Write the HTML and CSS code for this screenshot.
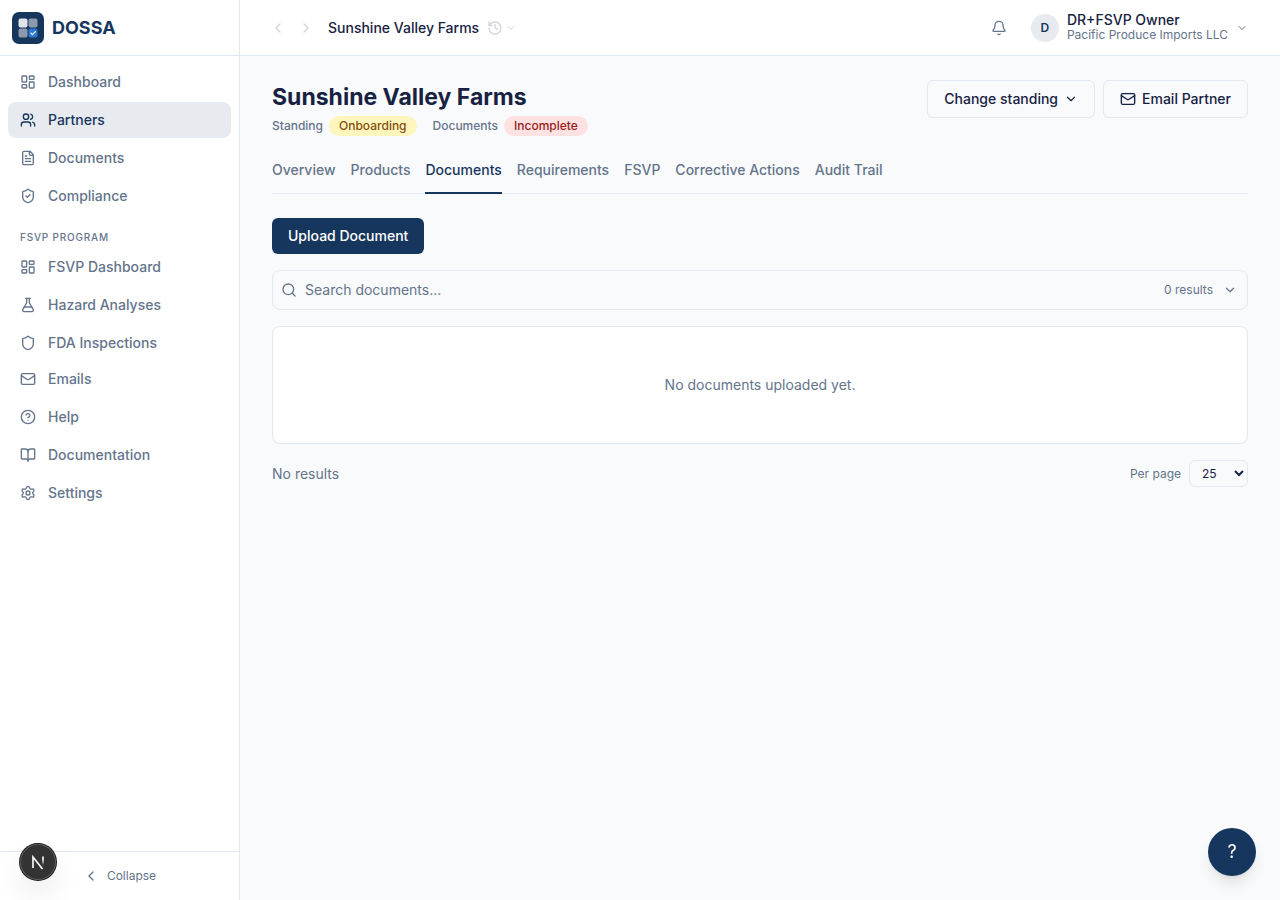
FILE: index.html
```html
<!DOCTYPE html>
<html lang="en">
<head>
<meta charset="utf-8">
<meta name="viewport" content="width=device-width, initial-scale=1">
<title>Sunshine Valley Farms - DOSSA</title>
<link rel="stylesheet" href="styles.css">
</head>
<body>
<svg class="sprite" aria-hidden="true">
  <symbol id="dashboard" viewBox="0 0 24 24"><rect width="7" height="9" x="3" y="3" rx="1"/><rect width="7" height="5" x="14" y="3" rx="1"/><rect width="7" height="9" x="14" y="12" rx="1"/><rect width="7" height="5" x="3" y="16" rx="1"/></symbol>
  <symbol id="users" viewBox="0 0 24 24"><path d="M16 21v-2a4 4 0 0 0-4-4H6a4 4 0 0 0-4 4v2"/><circle cx="9" cy="7" r="4"/><path d="M22 21v-2a4 4 0 0 0-3-3.87"/><path d="M16 3.13a4 4 0 0 1 0 7.75"/></symbol>
  <symbol id="file" viewBox="0 0 24 24"><path d="M15 2H6a2 2 0 0 0-2 2v16a2 2 0 0 0 2 2h12a2 2 0 0 0 2-2V7Z"/><path d="M14 2v4a2 2 0 0 0 2 2h4"/><path d="M10 9H8"/><path d="M16 13H8"/><path d="M16 17H8"/></symbol>
  <symbol id="shield" viewBox="0 0 24 24"><path d="M20 13c0 5-3.5 7.5-7.66 8.95a1 1 0 0 1-.67-.01C7.5 20.5 4 18 4 13V6a1 1 0 0 1 1-1c2 0 4.500-1.200 6.240-2.720a1.170 1.170 0 0 1 1.520 0C14.510 3.810 17 5 19 5a1 1 0 0 1 1 1z"/></symbol>
  <symbol id="shield-check" viewBox="0 0 24 24"><use href="#shield" width="24" height="24"/><path d="m9 12 2 2 4-4"/></symbol>
  <symbol id="flask" viewBox="0 0 24 24"><path d="M14 2v6a2 2 0 0 0 .245.960l5.510 10.080A2 2 0 0 1 18 22H6a2 2 0 0 1-1.755-2.960l5.510-10.080A2 2 0 0 0 10 8V2"/><path d="M6.453 15h11.094"/><path d="M8.500 2h7"/></symbol>
  <symbol id="mail" viewBox="0 0 24 24"><rect width="20" height="16" x="2" y="4" rx="2"/><path d="m22 7-8.970 5.700a1.940 1.940 0 0 1-2.060 0L2 7"/></symbol>
  <symbol id="help" viewBox="0 0 24 24"><circle cx="12" cy="12" r="10"/><path d="M9.090 9a3 3 0 0 1 5.830 1c0 2-3 3-3 3"/><path d="M12 17h.01"/></symbol>
  <symbol id="book" viewBox="0 0 24 24"><path d="M12 7v14"/><path d="M3 18a1 1 0 0 1-1-1V4a1 1 0 0 1 1-1h5a4 4 0 0 1 4 4 4 4 0 0 1 4-4h5a1 1 0 0 1 1 1v13a1 1 0 0 1-1 1h-6a3 3 0 0 0-3 3 3 3 0 0 0-3-3z"/></symbol>
  <symbol id="gear" viewBox="0 0 24 24"><path d="M9.671 4.136a2.340 2.340 0 0 1 4.659 0 2.340 2.340 0 0 0 3.319 1.915 2.340 2.340 0 0 1 2.330 4.033 2.340 2.340 0 0 0 0 3.831 2.340 2.340 0 0 1-2.330 4.033 2.340 2.340 0 0 0-3.319 1.915 2.340 2.340 0 0 1-4.659 0 2.340 2.340 0 0 0-3.320-1.915 2.340 2.340 0 0 1-2.330-4.033 2.340 2.340 0 0 0 0-3.831A2.340 2.340 0 0 1 6.350 6.051a2.340 2.340 0 0 0 3.319-1.915"/><circle cx="12" cy="12" r="3"/></symbol>
  <symbol id="left" viewBox="0 0 24 24"><path d="m15 18-6-6 6-6"/></symbol>
  <symbol id="right" viewBox="0 0 24 24"><path d="m9 18 6-6-6-6"/></symbol>
  <symbol id="down" viewBox="0 0 24 24"><path d="m6 9 6 6 6-6"/></symbol>
  <symbol id="history" viewBox="0 0 24 24"><path d="M3 12a9 9 0 1 0 9-9 9.750 9.750 0 0 0-6.740 2.740L3 8"/><path d="M3 3v5h5"/><path d="M12 7v5l4 2"/></symbol>
  <symbol id="bell" viewBox="0 0 24 24"><path d="M10.268 21a2 2 0 0 0 3.464 0"/><path d="M3.262 15.326A1 1 0 0 0 4 17h16a1 1 0 0 0 .740-1.673C19.410 13.956 18 12.499 18 8A6 6 0 0 0 6 8c0 4.499-1.411 5.956-2.738 7.326"/></symbol>
  <symbol id="search" viewBox="0 0 24 24"><circle cx="11" cy="11" r="8"/><path d="m21 21-4.300-4.300"/></symbol>
</svg>
<div class="app">
  <aside class="sidebar">
    <a class="brand" href="#">
      <svg class="logo" viewBox="0 0 32 32" aria-hidden="true">
        <rect class="logo-bg" width="32" height="32" rx="7"/>
        <rect class="tile tile-light" x="6.500" y="6.500" width="9" height="9" rx="2"/>
        <rect class="tile" x="16.500" y="6.500" width="9" height="9" rx="2"/>
        <rect class="tile" x="6.500" y="16.500" width="9" height="9" rx="2"/>
        <rect class="tile-blue" x="16.500" y="16.500" width="9" height="9" rx="2"/>
        <path class="tile-check" d="m19 21.200 1.400 1.400 3-3"/>
      </svg>
      <span>DOSSA</span>
    </a>
    <nav class="nav" aria-label="Main">
      <div class="nav-group">
        <a class="nav-item" href="#"><svg class="icon"><use href="#dashboard"/></svg>Dashboard</a>
        <a class="nav-item active" href="#" aria-current="page"><svg class="icon"><use href="#users"/></svg>Partners</a>
        <a class="nav-item" href="#"><svg class="icon"><use href="#file"/></svg>Documents</a>
        <a class="nav-item" href="#"><svg class="icon"><use href="#shield-check"/></svg>Compliance</a>
      </div>
      <h2 class="nav-label">FSVP PROGRAM</h2>
      <div class="nav-group">
        <a class="nav-item" href="#"><svg class="icon"><use href="#dashboard"/></svg>FSVP Dashboard</a>
        <a class="nav-item" href="#"><svg class="icon"><use href="#flask"/></svg>Hazard Analyses</a>
        <a class="nav-item" href="#"><svg class="icon"><use href="#shield"/></svg>FDA Inspections</a>
      </div>
      <div class="nav-group">
        <a class="nav-item" href="#"><svg class="icon"><use href="#mail"/></svg>Emails</a>
        <a class="nav-item" href="#"><svg class="icon"><use href="#help"/></svg>Help</a>
        <a class="nav-item" href="#"><svg class="icon"><use href="#book"/></svg>Documentation</a>
        <a class="nav-item" href="#"><svg class="icon"><use href="#gear"/></svg>Settings</a>
      </div>
    </nav>
    <div class="sidebar-foot">
      <button class="collapse" type="button"><svg class="icon"><use href="#left"/></svg>Collapse</button>
    </div>
  </aside>
  <div class="content">
    <header class="topbar">
      <div class="history">
        <button class="ghost" type="button" aria-label="Back" disabled><svg class="icon"><use href="#left"/></svg></button>
        <button class="ghost" type="button" aria-label="Forward" disabled><svg class="icon"><use href="#right"/></svg></button>
        <span class="crumb">Sunshine Valley Farms</span>
        <button class="recent" type="button" aria-label="Recent pages" disabled><svg class="icon"><use href="#history"/></svg><svg class="icon icon-xs"><use href="#down"/></svg></button>
      </div>
      <div class="account">
        <button class="bell" type="button" aria-label="Notifications"><svg class="icon"><use href="#bell"/></svg></button>
        <button class="user" type="button">
          <span class="avatar">D</span>
          <span class="user-text"><span class="user-name">DR+FSVP Owner</span><span class="user-org">Pacific Produce Imports LLC</span></span>
          <svg class="icon icon-xs"><use href="#down"/></svg>
        </button>
      </div>
    </header>
    <main class="main">
      <div class="page-head">
        <div class="page-id">
          <h1>Sunshine Valley Farms</h1>
          <div class="statuses">
            <div class="status">Standing<span class="pill pill-yellow">Onboarding</span></div>
            <div class="status">Documents<span class="pill pill-red">Incomplete</span></div>
          </div>
        </div>
        <div class="actions">
          <button class="btn" type="button">Change standing<svg class="icon icon-sm"><use href="#down"/></svg></button>
          <button class="btn" type="button"><svg class="icon"><use href="#mail"/></svg>Email Partner</button>
        </div>
      </div>
      <nav class="tabs" aria-label="Partner sections">
        <a class="tab" href="#">Overview</a>
        <a class="tab" href="#">Products</a>
        <a class="tab active" href="#" aria-current="page">Documents</a>
        <a class="tab" href="#">Requirements</a>
        <a class="tab" href="#">FSVP</a>
        <a class="tab" href="#">Corrective Actions</a>
        <a class="tab" href="#">Audit Trail</a>
      </nav>
      <section class="documents">
        <button class="upload" type="button">Upload Document</button>
        <div class="search">
          <svg class="icon"><use href="#search"/></svg>
          <input type="search" aria-label="Search documents" placeholder="Search documents...">
          <span class="count">0 results</span>
          <button class="expand" type="button" aria-label="Show filters"><svg class="icon icon-sm"><use href="#down"/></svg></button>
        </div>
        <div class="empty">No documents uploaded yet.</div>
        <div class="pager">
          <span>No results</span>
          <div class="per-page">
            <label for="per-page">Per page</label>
            <select id="per-page"><option>10</option><option selected>25</option><option>50</option><option>100</option></select>
          </div>
        </div>
      </section>
    </main>
  </div>
</div>
<button class="dev-badge" type="button" aria-label="Developer tools">
  <svg viewBox="0 0 36 36" aria-hidden="true">
    <defs><linearGradient id="fade" x1="0" y1="12" x2="0" y2="24" gradientUnits="userSpaceOnUse"><stop offset="0.300" stop-color="#fff"/><stop offset="0.800" stop-color="#fff" stop-opacity="0"/></linearGradient></defs>
    <path d="M13 24V13L22.500 25" fill="none" stroke="#fff" stroke-width="1.600"/>
    <path d="M23 12.500V23" fill="none" stroke="url(#fade)" stroke-width="1.600"/>
  </svg>
</button>
<button class="help-fab" type="button" aria-label="Help">?</button>
</body>
</html>
```
FILE: styles.css
```css
:root {
  --navy: #17365d;
  --ink: #172242;
  --muted: #64748b;
  --line: #e2e8f0;
  --page: #f9fafc;
  --tint: #e7ebef;
}
* { box-sizing: border-box; }
body {
  margin: 0;
  font: 400 14px/20px Inter, "Liberation Sans", sans-serif;
  color: var(--ink);
  background: var(--page);
}
h1, h2 { margin: 0; }
a { color: inherit; text-decoration: none; }
button {
  margin: 0;
  padding: 0;
  border: 0;
  background: none;
  font: inherit;
  color: inherit;
  cursor: pointer;
}
.sprite { position: absolute; width: 0; height: 0; }
.icon {
  flex: none;
  width: 16px;
  height: 16px;
  fill: none;
  stroke: currentColor;
  stroke-width: 2;
  stroke-linecap: round;
  stroke-linejoin: round;
}
.icon-sm { width: 14px; height: 14px; }
.icon-xs { width: 12px; height: 12px; }

.app { display: flex; min-height: 100vh; }
.sidebar {
  display: flex;
  flex-direction: column;
  flex: none;
  width: 240px;
  background: #fff;
  border-right: 1px solid var(--line);
}
.brand {
  display: flex;
  align-items: center;
  gap: 8px;
  height: 56px;
  padding: 0 12px;
  border-bottom: 1px solid var(--line);
  font-size: 18px;
  font-weight: 700;
  color: var(--navy);
}
.logo { width: 32px; height: 32px; }
.logo-bg { fill: var(--navy); }
.tile { fill: #8b9aae; }
.tile-light { fill: #dfe4ea; }
.tile-blue { fill: #2878d4; }
.tile-check { fill: none; stroke: #fff; stroke-width: 1.200; stroke-linecap: round; stroke-linejoin: round; }
.nav { flex: 1; padding: 8px; }
.nav-group { display: flex; flex-direction: column; gap: 2px; }
.nav-item {
  display: flex;
  align-items: center;
  gap: 12px;
  height: 36px;
  padding: 0 12px;
  border-radius: 8px;
  font-weight: 500;
  color: var(--muted);
}
.nav-item.active { background: var(--tint); color: var(--navy); }
.nav-label {
  padding: 16px 12px 4px;
  font-size: 10px;
  line-height: 15px;
  font-weight: 500;
  letter-spacing: 0.08em;
  color: var(--muted);
}
.sidebar-foot { padding: 8px; border-top: 1px solid var(--line); }
.collapse {
  display: flex;
  align-items: center;
  justify-content: center;
  gap: 8px;
  width: 100%;
  height: 32px;
  font-size: 12px;
  color: var(--muted);
}

.content { flex: 1; min-width: 0; }
.topbar {
  display: flex;
  align-items: center;
  justify-content: space-between;
  height: 56px;
  padding: 0 32px;
  background: #fff;
  border-bottom: 1px solid var(--line);
}
.history, .account { display: flex; align-items: center; }
.history { margin-left: -8px; }
.ghost { display: flex; padding: 6px; color: #d0d5de; }
.crumb { margin: 0 8px; font-weight: 500; }
.recent { display: flex; align-items: center; gap: 2px; color: #d0d5de; }
.bell { display: flex; padding: 8px; margin-right: 16px; color: var(--muted); }
.user { display: flex; align-items: center; gap: 8px; text-align: left; }
.user > .icon { color: var(--muted); }
.avatar {
  display: grid;
  place-items: center;
  width: 28px;
  height: 28px;
  border-radius: 50%;
  background: var(--tint);
  font-size: 12px;
  font-weight: 600;
  color: var(--navy);
}
.user-text { display: flex; flex-direction: column; }
.user-name { line-height: 14px; font-weight: 500; }
.user-org { font-size: 12px; line-height: 15px; color: var(--muted); }

.main { padding: 24px 32px; }
.page-head { display: flex; justify-content: space-between; align-items: flex-start; gap: 16px; }
h1 { font-size: 23px; line-height: 34px; font-weight: 700; }
.statuses { display: flex; gap: 16px; margin-top: 2px; }
.status { display: flex; align-items: center; gap: 6px; font-size: 12px; line-height: 16px; font-weight: 500; color: var(--muted); }
.pill { padding: 2px 10px; border-radius: 10px; }
.pill-yellow { background: #fef6bd; color: #854d0e; }
.pill-red { background: #fee2e2; color: #991b1b; }
.actions { display: flex; gap: 8px; }
.btn {
  display: flex;
  align-items: center;
  gap: 6px;
  height: 38px;
  padding: 0 16px;
  border: 1px solid var(--line);
  border-radius: 6px;
  font-weight: 500;
}
.tabs { display: flex; gap: 15px; margin-top: 16px; box-shadow: inset 0 -1px var(--line); }
.tab {
  padding: 8px 0 12px;
  border-bottom: 2px solid transparent;
  font-weight: 500;
  color: var(--muted);
}
.tab.active { border-color: var(--navy); color: var(--navy); }
.documents { display: flex; flex-direction: column; gap: 16px; margin-top: 24px; }
.upload {
  align-self: flex-start;
  height: 36px;
  padding: 0 16px;
  border-radius: 6px;
  background: var(--navy);
  font-weight: 500;
  color: #fff;
}
.search {
  display: flex;
  align-items: center;
  gap: 8px;
  height: 40px;
  padding: 0 8px;
  border: 1px solid var(--line);
  border-radius: 8px;
  color: var(--muted);
}
.search input {
  flex: 1;
  min-width: 0;
  padding: 0;
  border: 0;
  outline: 0;
  background: none;
  font: inherit;
  color: var(--ink);
}
.search input::placeholder { color: var(--muted); opacity: 1; }
.count { font-size: 12px; }
.expand { display: flex; padding: 2px; }
.empty {
  padding: 48px 16px;
  border: 1px solid var(--line);
  border-radius: 8px;
  background: #fff;
  text-align: center;
  color: var(--muted);
}
.pager { display: flex; align-items: center; justify-content: space-between; color: var(--muted); }
.per-page { display: flex; align-items: center; gap: 8px; font-size: 12px; }
.per-page select {
  height: 27px;
  padding: 4px 8px;
  border: 1px solid var(--line);
  border-radius: 6px;
  background: var(--page);
  font: inherit;
  line-height: 16px;
  color: var(--ink);
}

.dev-badge {
  position: fixed;
  left: 20px;
  bottom: 20px;
  width: 36px;
  height: 36px;
  border-radius: 50%;
  background: #333;
  box-shadow: 0 0 0 1px #171717, inset 0 0 0 1px #5c5c5c, 0 16px 32px -8px rgba(0, 0, 0, .24);
}
.dev-badge svg { display: block; width: 36px; height: 36px; }
.help-fab {
  position: fixed;
  right: 24px;
  bottom: 24px;
  width: 48px;
  height: 48px;
  border-radius: 50%;
  background: var(--navy);
  box-shadow: 0 10px 15px -3px rgba(0, 0, 0, .1), 0 4px 6px -4px rgba(0, 0, 0, .1);
  font-size: 18px;
  color: #fff;
}
```
